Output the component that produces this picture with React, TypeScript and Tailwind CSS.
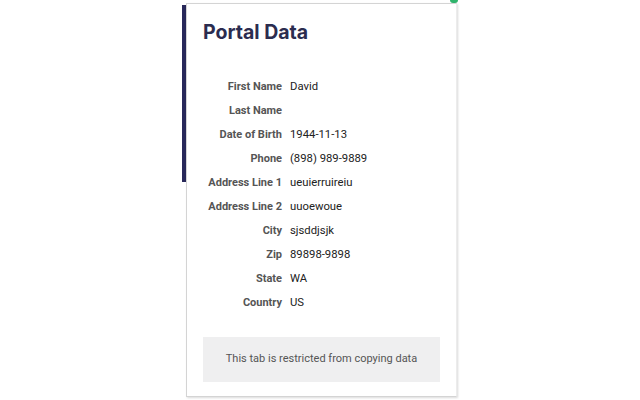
const ROWS: { label: string; value: string }[] = [
  { label: "First Name", value: "David" },
  { label: "Last Name", value: "" },
  { label: "Date of Birth", value: "1944-11-13" },
  { label: "Phone", value: "(898) 989-9889" },
  { label: "Address Line 1", value: "ueuierruireiu" },
  { label: "Address Line 2", value: "uuoewoue" },
  { label: "City", value: "sjsddjsjk" },
  { label: "Zip", value: "89898-9898" },
  { label: "State", value: "WA" },
  { label: "Country", value: "US" },
];

export default function App() {
  return (
    <div className="relative h-[400px] w-[640px] overflow-hidden bg-white font-['Roboto',sans-serif]">
      {/* page behind the popup: dark side rail + extension icon edge */}
      <div className="absolute left-[182px] top-[5px] h-[177px] w-[4px] bg-[#28285a]" />
      <div className="absolute left-[450px] top-0 h-[3px] w-[8px] rounded-b-sm bg-[#2fb36b]" />

      {/* popup */}
      <div className="absolute left-[186px] top-[3px] flex h-[394px] w-[271px] flex-col border border-[#d4d4d4] border-r-[#ececec] bg-white shadow-[1px_1px_2px_rgba(0,0,0,0.15)]">
        <h1 className="ml-[16px] mt-[16px] font-['Inter',sans-serif] text-[19.5px] font-bold leading-[24px] text-[#2b2c4f]">
          Portal Data
        </h1>

        <div className="mt-[31px] flex flex-col">
          {ROWS.map((r) => (
            <div key={r.label} className="flex h-[24px] items-center text-[11px]">
              <span className="w-[95px] text-right font-bold text-[#555]">{r.label}</span>
              <span className="ml-[8px] text-[11.3px] text-[#222]">{r.value}</span>
            </div>
          ))}
        </div>

        <div className="ml-[16px] mt-[22px] flex h-[45px] w-[237px] items-center justify-center bg-[#efeff0] text-[11px] text-[#555]">
          This tab is restricted from copying data
        </div>
      </div>
    </div>
  );
}
